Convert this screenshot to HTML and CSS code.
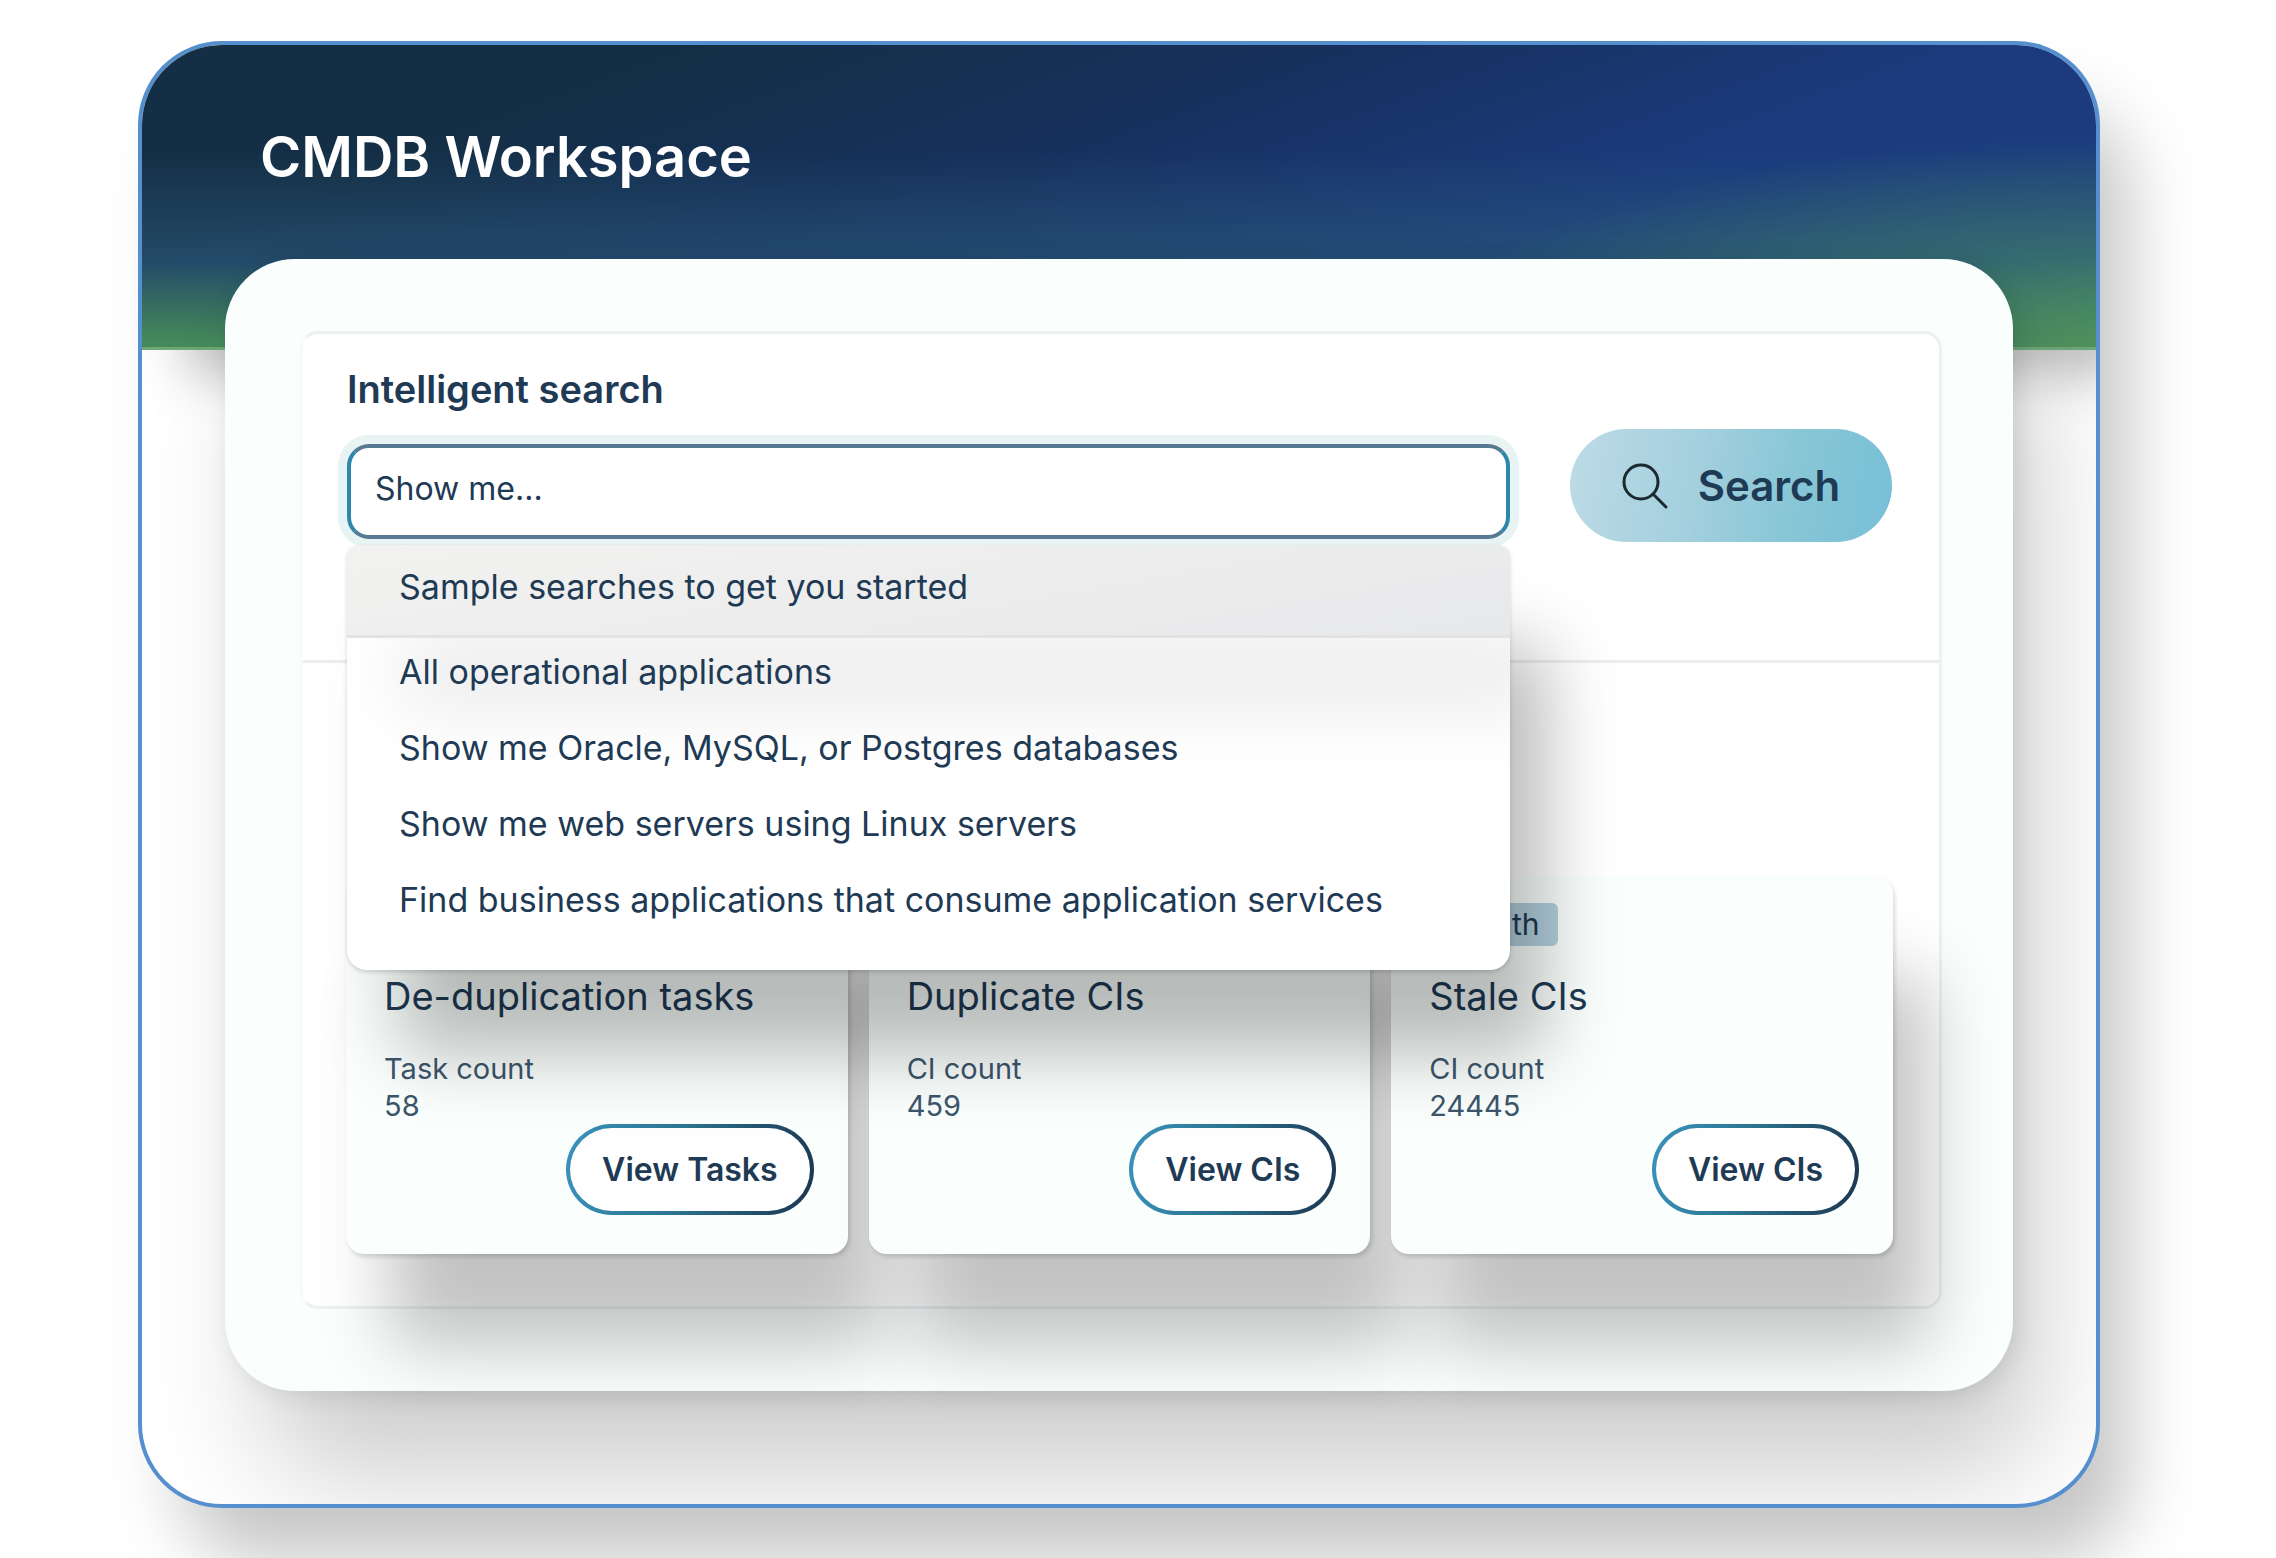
FILE: index.html
```html
<!DOCTYPE html>
<html lang="en">
<head>
	<meta charset="UTF-8">
	<title>CMDB Workspace</title>
	<link rel="stylesheet" href="styles.css">
</head>
<body>
<div class="window">
	<header class="header">
		<h1>CMDB Workspace</h1>
	</header>

	<main class="panel">
		<div class="box">
			<form class="search" onsubmit="return false">
				<div class="field">
					<label for="s">Intelligent search</label>
					<input type="text" id="s" value="Show me..." autocomplete="off">
					<div class="menu">
						<p class="menu-title">Sample searches to get you started</p>
						<ul>
							<li><a href="#">All operational applications</a></li>
							<li><a href="#">Show me Oracle, MySQL, or Postgres databases</a></li>
							<li><a href="#">Show me web servers using Linux servers</a></li>
							<li><a href="#">Find business applications that consume application services</a></li>
						</ul>
					</div>
				</div>
				<button type="submit" class="btn-search">
					<svg viewBox="0 0 46 46" fill="none" stroke="#1c2a30" stroke-width="3" stroke-linecap="round">
						<circle cx="19" cy="19" r="17"/>
						<path d="M31 31L44 44"/>
					</svg>
					Search
				</button>
			</form>

			<div class="cards">
				<section class="card">
					<h2>De-duplication tasks</h2>
					<p>Task count</p>
					<p>58</p>
					<button type="button" class="btn-view">View Tasks</button>
				</section>
				<section class="card">
					<h2>Duplicate CIs</h2>
					<p>CI count</p>
					<p>459</p>
					<button type="button" class="btn-view">View CIs</button>
				</section>
				<section class="card">
					<span class="tag">Health</span>
					<h2>Stale CIs</h2>
					<p>CI count</p>
					<p>24445</p>
					<button type="button" class="btn-view">View CIs</button>
				</section>
			</div>
		</div>
	</main>
</div>
</body>
</html>
```

FILE: styles.css
```css
*{
    box-sizing: border-box;
}
body{
    margin: 0;
    padding: 41px 176px 52px 138px;
    background-color: #fff;
    color: #1e3a54;
    font-family: Inter, "Liberation Sans", sans-serif;
    overflow: hidden;
}
h1,h2,p,ul{
    margin: 0;
    padding: 0;
}
li{
    list-style: none;
}
a{
    text-decoration: none;
    color: inherit;
}
input,button{
    font-family: inherit;
    color: inherit;
}

.window{
    border: 4px solid #558fce;
    border-radius: 84px;
    background-color: #fff;
    overflow: hidden;
    box-shadow: 36px 60px 72px -8px rgba(0,0,0,.23);
}
.header{
    height: 305px;
    padding: 76px 118px 0;
    border-bottom: 3px solid #6da877;
    background:
        radial-gradient(ellipse 38% 78% at 102% 108%, #55995a, rgba(60,120,110,.7) 50%, rgba(40,90,130,0)),
        linear-gradient(180deg, rgba(36,80,110,0) 35%, rgba(40,84,116,.75) 72%, #45895a 98%),
        linear-gradient(160deg, #142f45 20%, #16305c 42%, #1b3b7e 68%);
    box-shadow: 36px 32px 48px -8px rgba(0,0,0,.26);
}
.header h1{
    color: #fff;
    font-size: 56px;
    line-height: 72px;
    font-weight: 600;
}

.panel{
    position: relative;
    margin: -91px 83px 113px;
    padding: 72px 71px 82px 75px;
    border-radius: 70px;
    background-color: #fafffe;
    box-shadow: 32px 92px 120px -8px rgba(0,0,0,.2), 6px 4px 24px rgba(0,0,0,.1);
}
.box{
    border: 3px solid #eef0f3;
    border-left-color: #fafafc;
    border-radius: 18px;
    background-color: #fff;
}

/* search */
.search{
    display: flex;
    gap: 60px;
    padding: 33px 47px 118px 44px;
    border-bottom: 3px solid #ededf0;
}
.field{
    position: relative;
    flex: 1;
}
.field label{
    display: block;
    margin-bottom: 33px;
    font-size: 38px;
    line-height: 44px;
    font-weight: 600;
}
.field input{
    display: block;
    width: 100%;
    height: 95px;
    padding: 0 24px 6px;
    border: 4px solid #557a92;
    border-left-color: #2f86ad;
    border-right-color: #2f86ad;
    border-radius: 22px;
    outline: none;
    background-color: #fff;
    font-size: 32px;
    box-shadow: 0 0 0 9px #e8f4f3;
}
.btn-search{
    display: flex;
    align-items: center;
    justify-content: center;
    gap: 30px;
    width: 322px;
    height: 113px;
    margin-top: 62px;
    border: 0;
    border-radius: 57px;
    background: linear-gradient(100deg, #bddbe6, #a3cfde 40%, #86c6d5 70%, #78bfd8);
    font-size: 42px;
    font-weight: 600;
}
.btn-search svg{
    width: 46px;
    height: 46px;
}

/* dropdown */
.menu{
    position: absolute;
    top: 178px;
    left: 0;
    right: 0;
    z-index: 2;
    padding-bottom: 28px;
    border-radius: 12px 12px 20px 20px;
    background-color: #fff;
    overflow: hidden;
    font-size: 34px;
    box-shadow: 44px 92px 72px -8px rgba(0,0,0,.27), 0 2px 4px rgba(0,0,0,.16);
}
.menu-title{
    padding: 2px 52px 8px;
    border-bottom: 3px solid #e2e3e5;
    background: linear-gradient(170deg, #f2f2f0, #e7e8ea);
    line-height: 80px;
    box-shadow: 44px 80px 72px -8px rgba(0,0,0,.08);
}
.menu ul{
    position: relative;
}
.menu a{
    display: block;
    padding: 0 52px 8px;
    line-height: 68px;
}

/* cards */
.cards{
    display: grid;
    grid-template-columns: repeat(3, 1fr);
    gap: 21px;
    padding: 213px 46px 52px 43px;
}
.card{
    display: flex;
    flex-direction: column;
    justify-content: flex-end;
    align-items: flex-start;
    padding: 27px 34px 39px 38px;
    border-radius: 18px;
    background-color: #fafffe;
    box-shadow: 40px 96px 72px -4px rgba(0,0,0,.24), 2px 3px 4px rgba(0,0,0,.14);
}
.tag{
    margin-bottom: 26px;
    padding: 0 18px;
    border-radius: 6px;
    background-color: #b3d0dd;
    font-size: 30px;
    line-height: 43px;
}
.card h2{
    margin-bottom: 30px;
    font-size: 38px;
    line-height: 48px;
    font-weight: 400;
}
.card p{
    color: #3d566c;
    font-size: 29px;
    line-height: 37px;
}
.btn-view{
    align-self: flex-end;
    height: 91px;
    padding: 0 32px;
    border: 4px solid transparent;
    border-radius: 46px;
    background:
        linear-gradient(#fefefe, #fefefe) padding-box,
        linear-gradient(100deg, #3a92bd, #2c7590 45%, #1c3550) border-box;
    font-size: 32px;
    font-weight: 600;
}
```
